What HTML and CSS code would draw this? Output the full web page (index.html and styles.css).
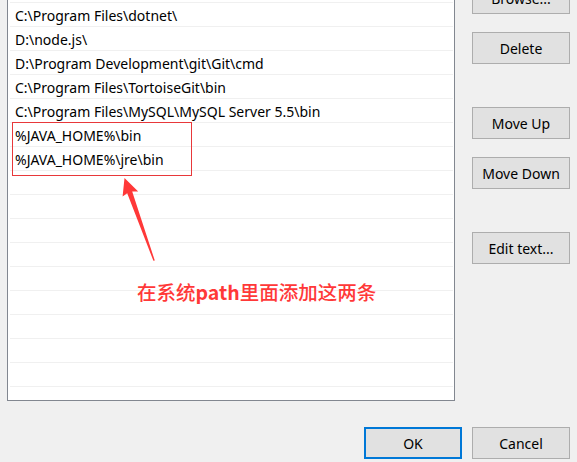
FILE: index.html
```html
<!DOCTYPE html>
<html lang="en">
<head>
<meta charset="utf-8">
<title>Edit environment variable</title>
<link rel="stylesheet" href="styles.css">
</head>
<body>
<div class="window">
  <div class="dialog">
    <div class="list">
      <div class="row"></div>
      <div class="row">C:\Program Files\dotnet\</div>
      <div class="row">D:\node.js\</div>
      <div class="row">D:\Program Development\git\Git\cmd</div>
      <div class="row">C:\Program Files\TortoiseGit\bin</div>
      <div class="row">C:\Program Files\MySQL\MySQL Server 5.5\bin</div>
      <div class="row">%JAVA_HOME%\bin</div>
      <div class="row">%JAVA_HOME%\jre\bin</div>
      <div class="row"></div>
      <div class="row"></div>
      <div class="row"></div>
      <div class="row"></div>
      <div class="row"></div>
      <div class="row"></div>
      <div class="row"></div>
      <div class="row"></div>
      <div class="row"></div>
      <div class="row"></div>
    </div>
    <div class="side">
      <button class="btn btn-browse">Browse...</button>
      <button class="btn btn-delete">Delete</button>
      <button class="btn btn-up">Move Up</button>
      <button class="btn btn-down">Move Down</button>
      <button class="btn btn-edit">Edit text...</button>
    </div>
  </div>
  <div class="footer">
    <button class="btn btn-ok">OK</button>
    <button class="btn">Cancel</button>
  </div>

  <div class="mark-box"></div>
  <svg class="mark-arrow" width="577" height="462" viewBox="0 0 577 462">
    <polygon points="124.5,178 138.2,191.6 132.2,191.4 154.8,260.6 153.4,260.8 127.2,193.2 122.6,196.4" fill="#ff3838"/>
  </svg>
  <div class="mark-text">在系统<span class="mark-latin">path</span>里面添加这两条</div>
</div>
</body>
</html>
```

FILE: styles.css
```css
html, body {
  margin: 0;
  padding: 0;
}

body {
  background: #f0f0f0;
  font-family: "Noto Sans", "Open Sans", sans-serif;
  font-size: 14px;
  color: #000;
}

.window {
  position: relative;
  width: 577px;
  height: 462px;
  overflow: hidden;
}

.dialog {
  display: flex;
  align-items: flex-start;
  margin-top: -22px;
}

.list {
  margin-left: 7px;
  width: 448px;
  height: 423px;
  box-sizing: border-box;
  border: 1px solid #828790;
  background: #fff;
  padding: 0 1px 0 2px;
  overflow: hidden;
}

.row {
  height: 24px;
  box-sizing: border-box;
  border-bottom: 1px solid #f0f0f0;
  padding: 2px 0 0 5px;
  line-height: 22px;
  white-space: nowrap;
}

.side {
  display: flex;
  flex-direction: column;
  margin-left: 17px;
  width: 98px;
}

.btn {
  display: flex;
  align-items: center;
  justify-content: center;
  box-sizing: border-box;
  width: 98px;
  height: 32px;
  padding: 0;
  margin: 0;
  background: #e1e1e1;
  border: 1px solid #adadad;
  border-radius: 0;
  font-family: inherit;
  font-size: 14px;
  color: #000;
}

.btn-browse { margin-top: 4px; }
.btn-delete { margin-top: 18px; }
.btn-up { margin-top: 43px; }
.btn-down { margin-top: 18px; }
.btn-edit { margin-top: 43px; }

.footer {
  display: flex;
  justify-content: flex-end;
  gap: 10px;
  margin-top: 26px;
  padding-right: 7px;
}

.btn-ok {
  border: 2px solid #0078d7;
}

.mark-box {
  position: absolute;
  left: 12px;
  top: 122px;
  width: 180px;
  height: 54px;
  box-sizing: border-box;
  border: 1px solid #e8383a;
}

.mark-arrow {
  position: absolute;
  left: 0;
  top: 0;
  pointer-events: none;
}

.mark-text {
  position: absolute;
  left: 137px;
  top: 279px;
  font-family: "Noto Sans CJK SC", sans-serif;
  font-size: 19.5px;
  font-weight: 500;
  line-height: 26px;
  color: #ff3838;
  white-space: nowrap;
}

.mark-latin {
  font-weight: 700;
}
```
